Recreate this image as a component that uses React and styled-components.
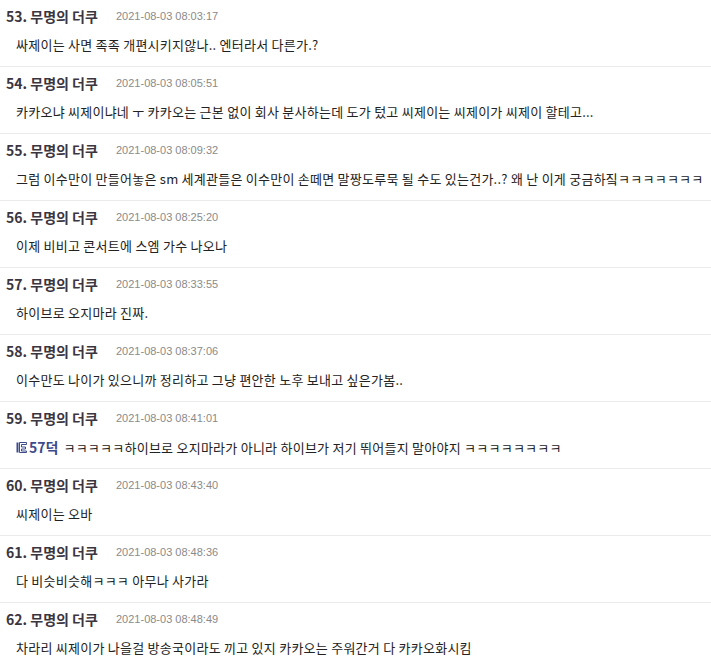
import React from 'react';
import styled, { createGlobalStyle } from 'styled-components';

const GlobalStyle = createGlobalStyle`
    body {
        margin: 0;
        background: #fff;
        font-family: "Noto Sans CJK KR", "Noto Sans", sans-serif;
    }
`

const comments = [
    { no: 53, date: '2021-08-03 08:03:17', text: '싸제이는 사면 족족 개편시키지않나.. 엔터라서 다른가.?' },
    { no: 54, date: '2021-08-03 08:05:51', text: '카카오냐 씨제이냐네 ㅜ 카카오는 근본 없이 회사 분사하는데 도가 텄고 씨제이는 씨제이가 씨제이 할테고...' },
    { no: 55, date: '2021-08-03 08:09:32', text: '그럼 이수만이 만들어놓은 sm 세계관들은 이수만이 손떼면 말짱도루묵 될 수도 있는건가..? 왜 난 이게 궁금하짘ㅋㅋㅋㅋㅋㅋㅋ' },
    { no: 56, date: '2021-08-03 08:25:20', text: '이제 비비고 콘서트에 스엠 가수 나오나' },
    { no: 57, date: '2021-08-03 08:33:55', text: '하이브로 오지마라 진짜.' },
    { no: 58, date: '2021-08-03 08:37:06', text: '이수만도 나이가 있으니까 정리하고 그냥 편안한 노후 보내고 싶은가봄..' },
    { no: 59, date: '2021-08-03 08:41:01', reply: 57, text: 'ㅋㅋㅋㅋㅋ하이브로 오지마라가 아니라 하이브가 저기 뛰어들지 말아야지 ㅋㅋㅋㅋㅋㅋㅋㅋ' },
    { no: 60, date: '2021-08-03 08:43:40', text: '씨제이는 오바' },
    { no: 61, date: '2021-08-03 08:48:36', text: '다 비슷비슷해ㅋㅋㅋ 아무나 사가라' },
    { no: 62, date: '2021-08-03 08:48:49', text: '차라리 씨제이가 나을걸 방송국이라도 끼고 있지 카카오는 주워간거 다 카카오화시킴' },
]

const ReplyIcon = () => (
    <svg width="12" height="12" viewBox="0 0 12 12">
        <rect x="0.5" y="1.5" width="2" height="10" fill="#3d4a8c" />
        <path d="M3.5 1.5h7v2h-5v2.5h4v2h-4v2h5v1.5h-7z" fill="none" stroke="#3d4a8c" strokeWidth="1" />
    </svg>
)

const App = () => {
    return (
        <>
            <GlobalStyle />
            <List>
                {comments.map(c => (
                    <Comment key={c.no}>
                        <Header>
                            <Author>{c.no}. 무명의 더쿠</Author>
                            <Date>{c.date}</Date>
                        </Header>
                        <Body>
                            {c.reply && (
                                <Reply href="#">
                                    <ReplyIcon />
                                    {c.reply}덕
                                </Reply>
                            )}
                            {c.text}
                        </Body>
                    </Comment>
                ))}
            </List>
        </>
    )
}

export default App

const List = styled.div`
    width: 711px;
`

const Comment = styled.div`
    padding: 7px 6px 11px;
    border-bottom: 1px solid #ebebeb;
`

const Header = styled.div`
    display: flex;
    align-items: center;
    height: 18px;
`

const Author = styled.span`
    width: 110px;
    font-size: 14px;
    font-weight: 700;
    color: #3b3540;
`

const Date = styled.span`
    font-family: "Liberation Sans", Arial, sans-serif;
    font-size: 11px;
    color: #8a8a8a;
`

const Body = styled.div`
    margin-top: 10px;
    padding-left: 10px;
    height: 20px;
    line-height: 20px;
    font-size: 13px;
    letter-spacing: 0.25px;
    color: #222;
    white-space: nowrap;
`

const Reply = styled.a`
    display: inline-flex;
    align-items: center;
    gap: 1px;
    margin-right: 5px;
    font-size: 14px;
    font-weight: 700;
    letter-spacing: 0;
    color: #3d4a8c;
    text-decoration: none;
`
